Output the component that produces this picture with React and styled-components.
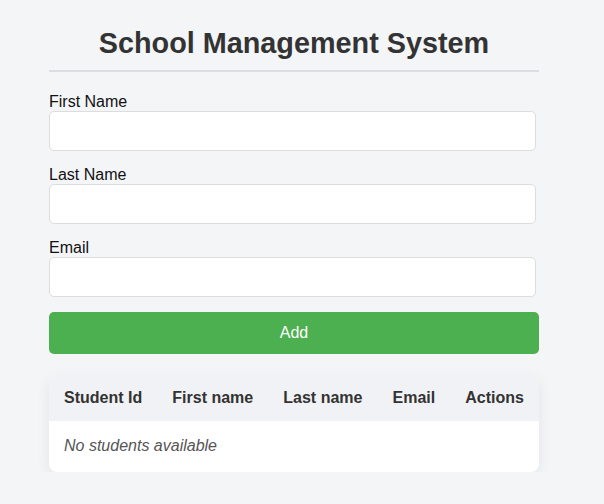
import React from "react";
import styled, { createGlobalStyle } from "styled-components";

const Global = createGlobalStyle`
  html, body { margin: 0; padding: 0; background: #f4f5f7; }
  body { font-family: "Liberation Sans", Arial, sans-serif; }
  * { box-sizing: border-box; }
`;

const Page = styled.div`
  padding: 27px 0 0 49px;
`;

const Container = styled.div`
  width: 490px;
  display: flex;
  flex-direction: column;
`;

const Title = styled.h1`
  margin: 0;
  font-size: 28.8px;
  font-weight: 700;
  color: #333;
  text-align: center;
  padding-bottom: 10px;
  border-bottom: 2px solid #dcdde0;
`;

const Form = styled.form`
  display: flex;
  flex-direction: column;
  margin-top: 21px;
`;

const Field = styled.div`
  display: flex;
  flex-direction: column;
  margin-bottom: 15px;
`;

const Label = styled.label`
  font-size: 16px;
  color: #111;
`;

const Input = styled.input`
  width: 487px;
  height: 40px;
  border: 1px solid #dddddd;
  border-radius: 5px;
  background: #fff;
  padding: 0 10px;
  font-size: 16px;
  font-family: inherit;
  outline: none;
`;

const Button = styled.button`
  width: 100%;
  height: 42px;
  border: none;
  border-radius: 5px;
  background: #4caf50;
  color: #fff;
  font-size: 16px;
  font-family: inherit;
  cursor: pointer;
`;

const TableCard = styled.div`
  margin-top: 21px;
  background: #fff;
  border-radius: 8px;
  overflow: hidden;
  box-shadow: 0 4px 14px rgba(0, 0, 0, 0.07);
`;

const Table = styled.table`
  width: 100%;
  border-collapse: collapse;
`;

const Th = styled.th`
  background: #f1f2f5;
  color: #333;
  font-size: 16px;
  font-weight: 700;
  padding: 14px 15px;
  text-align: left;
  white-space: nowrap;
`;

const Td = styled.td`
  padding: 16px 15px 17px;
  font-size: 16px;
  font-style: italic;
  color: #555;
`;

export default function App() {
  const cols = ["Student Id", "First name", "Last name", "Email", "Actions"];
  return (
    <Page>
      <Global />
      <Container>
        <Title>School Management System</Title>
        <Form onSubmit={(e) => e.preventDefault()}>
          <Field>
            <Label>First Name</Label>
            <Input type="text" />
          </Field>
          <Field>
            <Label>Last Name</Label>
            <Input type="text" />
          </Field>
          <Field>
            <Label>Email</Label>
            <Input type="email" />
          </Field>
          <Button type="submit">Add</Button>
        </Form>
        <TableCard>
          <Table>
            <thead>
              <tr>
                {cols.map((c) => (
                  <Th key={c}>{c}</Th>
                ))}
              </tr>
            </thead>
            <tbody>
              <tr>
                <Td colSpan={5}>No students available</Td>
              </tr>
            </tbody>
          </Table>
        </TableCard>
      </Container>
    </Page>
  );
}
